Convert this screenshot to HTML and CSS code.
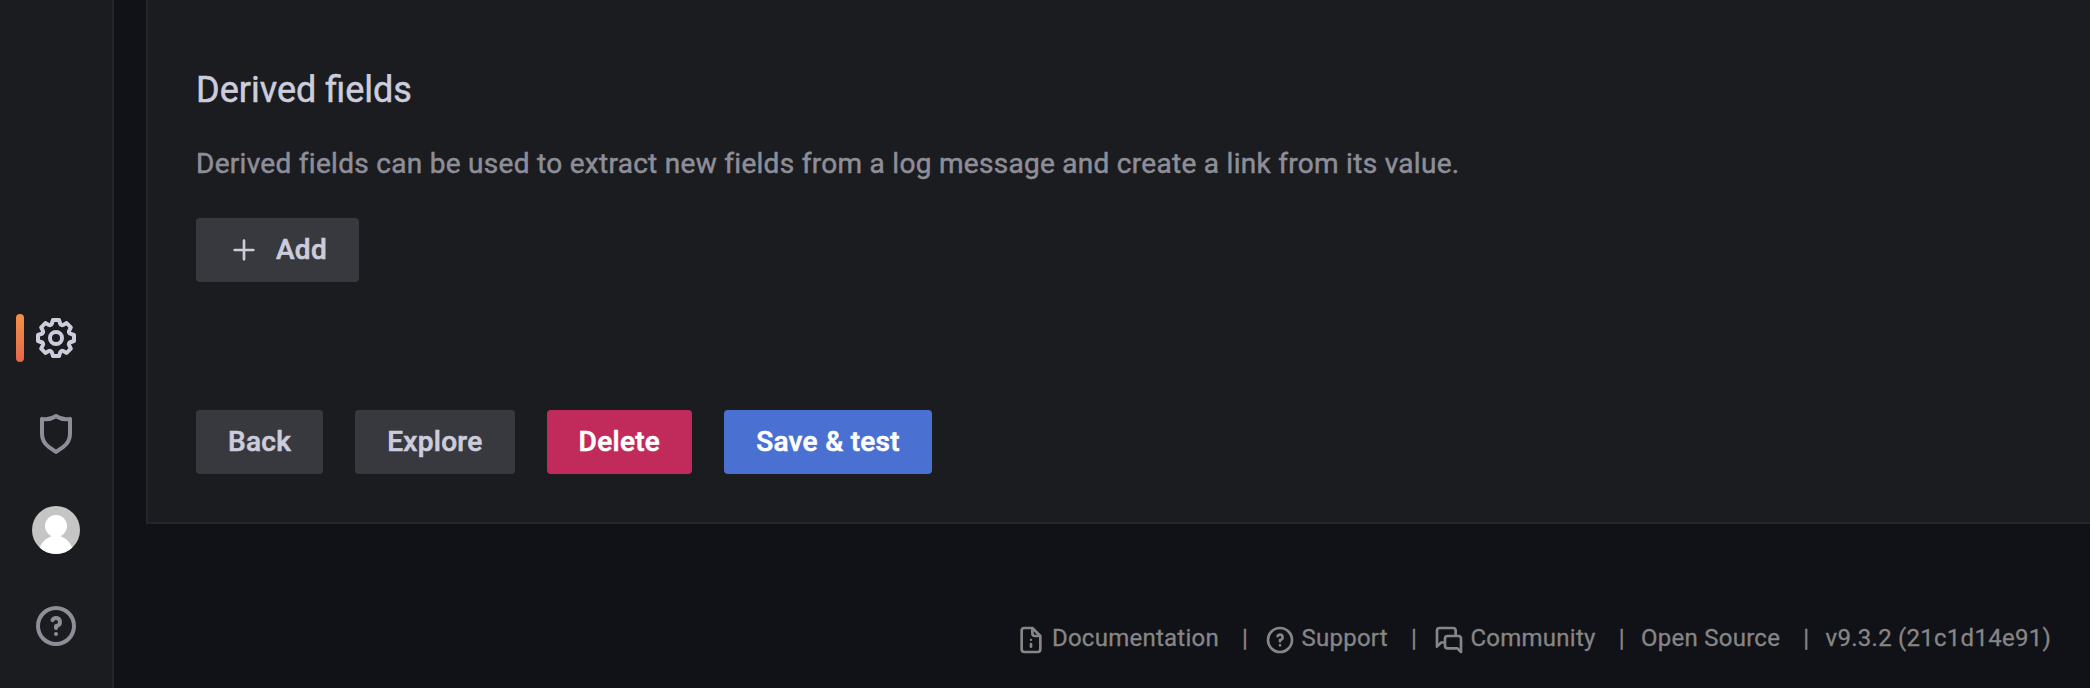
FILE: index.html
```html
<!DOCTYPE html>
<html lang="en">
<head>
<meta charset="utf-8">
<title>Data source settings</title>
<link rel="stylesheet" href="styles.css">
</head>
<body>
<div class="app">
  <nav class="sidebar">
    <a class="nav-item nav-item-active">
      <span class="marker"></span>
      <svg class="nav-icon" viewBox="0 0 24 24"><path d="M21.32,9.55l-1.89-.63.89-1.78A1,1,0,0,0,20.13,6L18,3.87a1,1,0,0,0-1.15-.19l-1.78.89-.63-1.89A1,1,0,0,0,13.5,2h-3a1,1,0,0,0-.95.68L8.92,4.57,7.14,3.68A1,1,0,0,0,6,3.87L3.87,6a1,1,0,0,0-.19,1.15l.89,1.78-1.89.63A1,1,0,0,0,2,10.5v3a1,1,0,0,0,.68.95l1.89.63-.89,1.78A1,1,0,0,0,3.87,18L6,20.13a1,1,0,0,0,1.15.19l1.78-.89.63,1.89a1,1,0,0,0,.95.68h3a1,1,0,0,0,.95-.68l.63-1.89,1.78.89A1,1,0,0,0,18,20.13L20.13,18a1,1,0,0,0,.19-1.15l-.89-1.78,1.89-.63A1,1,0,0,0,22,13.5v-3A1,1,0,0,0,21.32,9.55ZM20,12.78l-1.2.4A2,2,0,0,0,17.64,16l.57,1.14-1.1,1.1L16,17.64a2,2,0,0,0-2.79,1.16l-.4,1.2H11.22l-.4-1.2A2,2,0,0,0,8,17.64l-1.14.57-1.1-1.1L6.36,16A2,2,0,0,0,5.2,13.18L4,12.78V11.22l1.2-.4A2,2,0,0,0,6.36,8L5.79,6.89l1.1-1.1L8,6.36A2,2,0,0,0,10.82,5.2l.4-1.2h1.56l.4,1.2A2,2,0,0,0,16,6.36l1.14-.57,1.1,1.1L17.64,8a2,2,0,0,0,1.16,2.79l1.2.4ZM12,8a4,4,0,1,0,4,4A4,4,0,0,0,12,8Zm0,6a2,2,0,1,1,2-2A2,2,0,0,1,12,14Z"/></svg>
    </a>
    <a class="nav-item">
      <svg class="nav-icon" viewBox="0 0 24 24"><path d="M19.63,3.65a1,1,0,0,0-.84-.2,8,8,0,0,1-6.22-1.27,1,1,0,0,0-1.14,0A8,8,0,0,1,5.21,3.45a1,1,0,0,0-.84.2A1,1,0,0,0,4,4.43v7.45a9,9,0,0,0,3.77,7.33l3.65,2.6a1,1,0,0,0,1.16,0l3.65-2.6A9,9,0,0,0,20,11.88V4.43A1,1,0,0,0,19.63,3.65ZM18,11.88a7,7,0,0,1-2.93,5.7L12,19.77,8.93,17.58A7,7,0,0,1,6,11.88V5.58a10,10,0,0,0,6-1.39,10,10,0,0,0,6,1.39Z"/></svg>
    </a>
    <a class="nav-item">
      <svg class="avatar" viewBox="0 0 48 48"><rect width="48" height="48" fill="#c5c5c5"/><circle cx="24" cy="20" r="11" fill="#fff"/><path fill="#fff" d="M20 28h8c0 2 1 2.500 3 3.500 4.500 2 8 6 9.500 11V48h-33v-5.500c1.500-5 5-9 9.500-11 2-1 3-1.500 3-3.500z"/></svg>
    </a>
    <a class="nav-item">
      <svg class="nav-icon" viewBox="0 0 24 24"><path d="M12,15a1,1,0,1,0,1,1A1,1,0,0,0,12,15ZM12,2A10,10,0,1,0,22,12,10,10,0,0,0,12,2Zm0,18a8,8,0,1,1,8-8A8,8,0,0,1,12,20ZM12,7A3,3,0,0,0,9.400,8.500a1,1,0,1,0,1.730,1A1,1,0,0,1,12,9a1,1,0,0,1,0,2,1,1,0,0,0-1,1v1a1,1,0,0,0,2,0v-.18A3,3,0,0,0,12,7Z"/></svg>
    </a>
  </nav>
  <div class="content">
    <main class="panel">
      <h3 class="heading">Derived fields</h3>
      <p class="description">Derived fields can be used to extract new fields from a log message and create a link from its value.</p>
      <button class="button button-add"><svg class="plus" viewBox="0 0 24 24"><path d="M19,11H13V5a1,1,0,0,0-2,0v6H5a1,1,0,0,0,0,2h6v6a1,1,0,0,0,2,0V13h6a1,1,0,0,0,0-2Z"/></svg>Add</button>
      <div class="actions">
        <button class="button">Back</button>
        <button class="button">Explore</button>
        <button class="button button-danger">Delete</button>
        <button class="button button-primary">Save &amp; test</button>
      </div>
    </main>
    <footer class="footer">
      <a class="footer-item"><svg class="footer-icon" viewBox="0 0 24 24"><path d="M20,8.940a1.310,1.310,0,0,0-.06-.27l0-.09a1.070,1.070,0,0,0-.19-.28h0l-6-6h0a1.070,1.070,0,0,0-.28-.19l-.1,0A1.100,1.100,0,0,0,13.060,2H7A3,3,0,0,0,4,5V19a3,3,0,0,0,3,3H17a3,3,0,0,0,3-3V9S20,9,20,8.940ZM14,5.410,16.590,8H15a1,1,0,0,1-1-1ZM18,19a1,1,0,0,1-1,1H7a1,1,0,0,1-1-1V5A1,1,0,0,1,7,4h5V7a3,3,0,0,0,3,3h3ZM12,14a1,1,0,0,0-1,1v2a1,1,0,0,0,2,0v-2A1,1,0,0,0,12,14ZM12,11a.9.9,0,1,0,.9.900A.9.9,0,0,0,12,11Z"/></svg>Documentation</a>
      <span class="separator">|</span>
      <a class="footer-item"><svg class="footer-icon" viewBox="0 0 24 24"><path d="M12,15a1,1,0,1,0,1,1A1,1,0,0,0,12,15ZM12,2A10,10,0,1,0,22,12,10,10,0,0,0,12,2Zm0,18a8,8,0,1,1,8-8A8,8,0,0,1,12,20ZM12,7A3,3,0,0,0,9.400,8.500a1,1,0,1,0,1.730,1A1,1,0,0,1,12,9a1,1,0,0,1,0,2,1,1,0,0,0-1,1v1a1,1,0,0,0,2,0v-.18A3,3,0,0,0,12,7Z"/></svg>Support</a>
      <span class="separator">|</span>
      <a class="footer-item"><svg class="footer-icon" viewBox="0 0 24 24"><path d="M20,8H18V5a3,3,0,0,0-3-3H5A3,3,0,0,0,2,5V17a1,1,0,0,0,.62.920A.84.84,0,0,0,3,18a1,1,0,0,0,.71-.29l2.810-2.820H8v1.440a3,3,0,0,0,3,3h6.920l2.370,2.380A1,1,0,0,0,21,22a.84.84,0,0,0,.38-.08A1,1,0,0,0,22,21V11A3,3,0,0,0,20,8ZM8,11v1.890H6.110a1,1,0,0,0-.71.290L4,14.590V5A1,1,0,0,1,5,4H15a1,1,0,0,1,1,1V8H11A3,3,0,0,0,8,11Zm12,7.590-1-1a1,1,0,0,0-.71-.3H11a1,1,0,0,1-1-1V11a1,1,0,0,1,1-1h8a1,1,0,0,1,1,1Z"/></svg>Community</a>
      <span class="separator">|</span>
      <a class="footer-item">Open Source</a>
      <span class="separator">|</span>
      <a class="footer-item">v9.3.2 (21c1d14e91)</a>
    </footer>
  </div>
</div>
</body>
</html>
```

FILE: styles.css
```css
* { box-sizing: border-box; }

body {
  margin: 0;
  background: #111217;
  font: 400 28px/44px Roboto, sans-serif;
  letter-spacing: 0.29px;
  color: #ccccdc;
  -webkit-text-stroke: 0.5px currentColor;
}

svg { display: block; flex: none; fill: currentColor; }

.app { display: flex; height: 688px; overflow: hidden; }

.sidebar {
  display: flex;
  flex: none;
  flex-direction: column;
  justify-content: flex-end;
  width: 114px;
  padding-bottom: 14px;
  border-right: 2px solid #25262b;
  background: #1b1c20;
}

.nav-item {
  position: relative;
  display: flex;
  align-items: center;
  justify-content: center;
  width: 112px;
  height: 96px;
  color: #8e8e99;
}

.nav-item-active { color: #ccccdc; }

.marker {
  position: absolute;
  left: 16px;
  top: 24px;
  width: 8px;
  height: 48px;
  border-radius: 4px;
  background: linear-gradient(#f29148, #e6674b);
}

.nav-icon { width: 48px; height: 48px; }
.avatar { width: 48px; height: 48px; border-radius: 50%; }

.content { flex: 1; min-width: 0; padding-left: 32px; }

.panel {
  height: 524px;
  padding: 65px 48px 0;
  border: solid #25262b;
  border-width: 0 0 2px 2px;
  background: #1b1c20;
}

.heading {
  margin: 0;
  font-size: 36px;
  line-height: 50px;
  font-weight: 400;
  letter-spacing: 0;
}

.description { margin: 27px 0 32px; color: #8e8e99; }

.button {
  display: flex;
  align-items: center;
  height: 64px;
  padding: 0 32px;
  border: 0;
  border-radius: 4px;
  background: #38393e;
  color: #ccccdc;
  font: 500 28px/64px Roboto, sans-serif;
  letter-spacing: 0.3px;
  -webkit-text-stroke: 0.6px currentColor;
}

.button-danger { background: #c12b5c; color: #fff; }
.button-primary { background: #4a71d2; color: #fff; }
.plus { width: 32px; height: 32px; margin-right: 16px; }

.actions { display: flex; gap: 32px; margin-top: 128px; }

.footer {
  display: flex;
  justify-content: flex-end;
  margin-top: 96px;
  padding-right: 39px;
  font-size: 24px;
  line-height: 36px;
  letter-spacing: 0.257px;
  color: #868686;
  -webkit-text-stroke-width: 0.3px;
}

.footer-item { display: flex; }
.footer-icon { width: 32px; height: 32px; margin: 4px 5px 0 0; }
.separator { padding: 0 16.300px 0 23px; }
```
